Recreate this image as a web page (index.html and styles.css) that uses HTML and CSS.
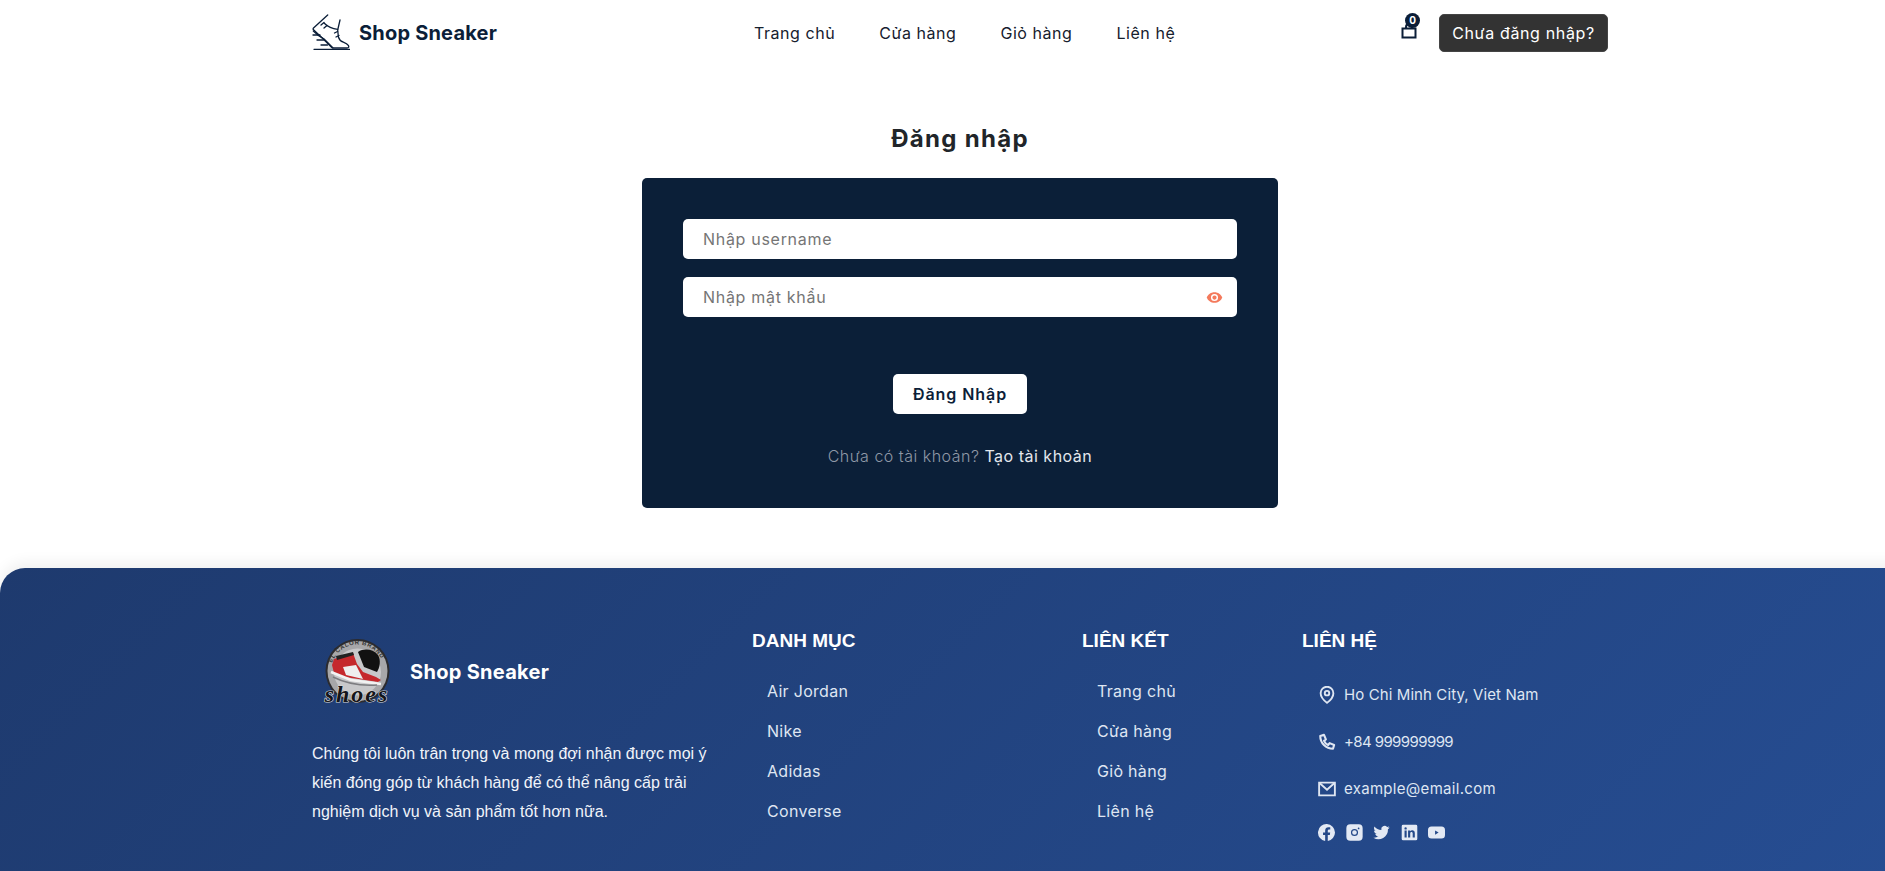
FILE: index.html

```html
<!DOCTYPE html>
<html lang="vi">
<head>
    <meta charset="UTF-8">
    <meta name="viewport" content="width=device-width, initial-scale=1.0">
    <title>Đăng nhập - Shop Sneaker</title>
    <link rel="stylesheet" href="styles.css">
</head>
<body>
    <header class="header">
        <a class="brand" href="#">
            <svg class="brand-logo" viewBox="0 0 38 37" fill="none" stroke="#0b1e38" stroke-width="1.300" stroke-linecap="round" stroke-linejoin="round">
                <path d="M2 35.300h35.500"/>
                <path d="M15.700 1 1.500 14c-.5.6-.5 1.200 0 1.800l8.500 8 9.500 9.500c.5.500 1 .7 1.800.7H35c1.700 0 2.200-1.200 1.300-2.600-1-1.500-3-2.400-5-3.200-2.500-1-4.200-2.600-4.900-5.200L25.700 16 28 6"/>
                <path d="M12.300 9.300c3.500 3.600 8 5.600 13.400 6"/>
                <path d="M1.300 17c3.500 3.500 6.500 6 10.500 7.800l9 9"/>
                <path d="m9 11 3-2.500M12 14l3-2.500M22.500 19l3-1.500M24 23l3-1.500"/>
                <path d="M1 21h7M5 26h6.500M9 31h6.500"/>
            </svg>
            <span>Shop Sneaker</span>
        </a>
        <nav class="nav">
            <a href="#">Trang chủ</a>
            <a href="#">Cửa hàng</a>
            <a href="#">Giỏ hàng</a>
            <a href="#">Liên hệ</a>
        </nav>
        <div class="header-right">
            <a class="cart" href="#">
                <svg viewBox="0 0 16 16" fill="none" stroke="#0b1e38" stroke-width="2">
                    <path d="M1.500 5.500h13v9h-13z"/>
                    <path d="M5 5.500V4a3 3 0 0 1 6 0v1.500"/>
                </svg>
                <span class="cart-count">0</span>
            </a>
            <button class="account-btn">Chưa đăng nhập?</button>
        </div>
    </header>

    <main class="main">
        <h1 class="page-title">Đăng nhập</h1>
        <form class="login-card">
            <div class="field">
                <input type="text" placeholder="Nhập username">
            </div>
            <div class="field">
                <input type="password" placeholder="Nhập mật khẩu">
                <svg class="eye" viewBox="0 0 24 24" fill="#f47a5c">
                    <path d="M12 4.500C7 4.500 2.700 7.600 1 12c1.700 4.400 6 7.500 11 7.500s9.300-3.100 11-7.500c-1.700-4.400-6-7.500-11-7.500zM12 17a5 5 0 1 1 0-10 5 5 0 0 1 0 10zm0-8a3 3 0 1 0 0 6 3 3 0 0 0 0-6z"/>
                </svg>
            </div>
            <button class="submit-btn" type="button">Đăng Nhập</button>
            <p class="signup">Chưa có tài khoản? <a href="#">Tạo tài khoản</a></p>
        </form>
    </main>

    <footer class="footer">
        <div class="footer-inner">
            <div class="footer-about">
                <div class="footer-brand">
                    <svg class="badge" viewBox="0 0 80 85">
                        <defs>
                            <path id="badge-arc" d="M13 39a26.500 26.500 0 0 1 53 0"/>
                        </defs>
                        <circle cx="39.500" cy="39" r="32" fill="#2b2b2f"/>
                        <circle cx="39.500" cy="39" r="30" fill="#a7a7a9"/>
                        <circle cx="39.500" cy="40" r="23.500" fill="#c8c8ca"/>
                        <text class="badge-ring"><textPath href="#badge-arc" startOffset="8">EL CALOR BRAND</textPath></text>
                        <path d="M40 20c6-4 15-3 20 3 3 5 2 12-1 17L46 35z" fill="#111"/>
                        <path d="M16 27l19-6 4 11 6 8 13 5 5 3-3 2-33-5-11-4-2-8z" fill="#c5282c"/>
                        <path d="M18 24l17-4 1 3-17 5z" fill="#222"/>
                        <path d="M25 35l13-2 7 14-17-4z" fill="#eeeeee"/>
                        <path d="M13 40l20 8 30 4" fill="none" stroke="#f2f2f2" stroke-width="2.600"/>
                        <path d="M15 45c14 7 28 9 44 8" fill="none" stroke="#7d7d80" stroke-width="1.500"/>
                        <text class="badge-text" x="39" y="70" text-anchor="middle">shoes</text>
                    </svg>
                    <span class="footer-brand-name">Shop Sneaker</span>
                </div>
                <p class="footer-desc">Chúng tôi luôn trân trọng và mong đợi nhận được mọi ý kiến đóng góp từ khách hàng để có thể nâng cấp trải nghiệm dịch vụ và sản phẩm tốt hơn nữa.</p>
            </div>
            <div class="footer-col">
                <h3>DANH MỤC</h3>
                <ul>
                    <li><a href="#">Air Jordan</a></li>
                    <li><a href="#">Nike</a></li>
                    <li><a href="#">Adidas</a></li>
                    <li><a href="#">Converse</a></li>
                </ul>
            </div>
            <div class="footer-col">
                <h3>LIÊN KẾT</h3>
                <ul>
                    <li><a href="#">Trang chủ</a></li>
                    <li><a href="#">Cửa hàng</a></li>
                    <li><a href="#">Giỏ hàng</a></li>
                    <li><a href="#">Liên hệ</a></li>
                </ul>
            </div>
            <div class="footer-col">
                <h3>LIÊN HỆ</h3>
                <div class="contact-list">
                    <div class="contact-item contact-place">
                        <svg viewBox="0 0 24 24" fill="none" stroke="#dfe6f2" stroke-width="2.500">
                            <path d="M12 22.500s8.500-6.500 8.500-13a8.500 8.500 0 0 0-17 0c0 6.500 8.500 13 8.500 13z"/>
                            <circle cx="12" cy="9.500" r="3"/>
                        </svg>
                        <span>Ho Chi Minh City, Viet Nam</span>
                    </div>
                    <div class="contact-item contact-phone">
                        <svg viewBox="0 0 24 24" fill="none" stroke="#dfe6f2" stroke-width="2.800" stroke-linejoin="round">
                            <path d="M3 4 8 2.500l2.500 6-2.500 2c1.200 2.600 3 4.400 5.500 5.500l2-2.500 6 2.500L20 21C10.500 21 3 13.500 3 4z"/>
                        </svg>
                        <span>+84 999999999</span>
                    </div>
                    <div class="contact-item">
                        <svg viewBox="0 0 24 24" fill="none" stroke="#dfe6f2" stroke-width="2.500">
                            <path d="M1.500 3.500h21v17h-21z"/>
                            <path d="m2 4 10 9 10-9"/>
                        </svg>
                        <span>example@email.com</span>
                    </div>
                    <div class="social">
                        <svg viewBox="0 0 24 24" fill="#e3e9f4">
                            <path d="M24 12a12 12 0 1 0-13.900 11.900v-8.400h-3V12h3V9.400c0-3 1.800-4.700 4.500-4.700 1.300 0 2.700.2 2.700.2v3h-1.500c-1.500 0-2 .9-2 1.900V12h3.400l-.5 3.500h-2.900v8.400A12 12 0 0 0 24 12z"/>
                        </svg>
                        <svg viewBox="0 0 24 24" fill="#e3e9f4">
                            <path fill-rule="evenodd" d="M6 .5h12A5.500 5.500 0 0 1 23.500 6v12a5.500 5.500 0 0 1-5.500 5.500H6A5.500 5.500 0 0 1 .5 18V6A5.500 5.500 0 0 1 6 .5zM12 7a5 5 0 1 0 0 10 5 5 0 0 0 0-10zm0 1.700a3.300 3.300 0 1 1 0 6.600 3.300 3.300 0 0 1 0-6.600zM17.800 5a1.200 1.200 0 1 0 0 2.400 1.200 1.200 0 0 0 0-2.400z"/>
                        </svg>
                        <svg viewBox="0 0 24 24" fill="#e3e9f4">
                            <path d="M23.500 5c-.8.400-1.800.6-2.700.8 1-.6 1.700-1.500 2.100-2.600-.9.500-1.900.9-3 1.100a4.700 4.700 0 0 0-8.100 4.300C7.900 8.400 4.400 6.500 2.100 3.600c-1.300 2.200-.6 4.900 1.500 6.300-.8 0-1.500-.2-2.100-.6 0 2.300 1.600 4.200 3.800 4.700-.7.200-1.400.2-2.100.1.600 1.900 2.300 3.200 4.400 3.300A9.500 9.500 0 0 1 .5 19.300 13.400 13.400 0 0 0 21.100 7.400c.9-.6 1.700-1.400 2.400-2.400z"/>
                        </svg>
                        <svg viewBox="0 0 24 24" fill="#e3e9f4">
                            <path fill-rule="evenodd" d="M3 1h18a2 2 0 0 1 2 2v18a2 2 0 0 1-2 2H3a2 2 0 0 1-2-2V3a2 2 0 0 1 2-2zm2 8v10h3V9zm1.500-4.500a1.700 1.700 0 1 0 0 3.400 1.700 1.700 0 0 0 0-3.400zM10 9v10h3v-5.500c0-1.500.7-2.200 1.800-2.200s1.700.7 1.700 2.200V19h3v-6c0-3-1.500-4.200-3.600-4.200-1.300 0-2.300.6-2.900 1.500V9z"/>
                        </svg>
                        <svg viewBox="0 0 24 24" fill="#e3e9f4">
                            <path fill-rule="evenodd" d="M5 3.500h14a5 5 0 0 1 5 5v7a5 5 0 0 1-5 5H5a5 5 0 0 1-5-5v-7a5 5 0 0 1 5-5zm5 5.500v6l5-3z"/>
                        </svg>
                    </div>
                </div>
            </div>
        </div>
    </footer>
</body>
</html>
```

FILE: styles.css

```css
* { box-sizing: border-box; }
html { height: 100%; overflow: hidden; }
body { margin: 0; width: 1920px; height: 100%; font-family: "Inter", "Noto Sans", sans-serif; background-color: #fff; color: #0b1e38; display: flex; flex-direction: column; }
a { color: inherit; text-decoration: none; }

.header { width: 1296px; height: 65px; margin: 0 auto; display: flex; align-items: center; flex-shrink: 0; }
.brand { width: 442px; display: flex; align-items: center; gap: 9px; font-size: 20px; font-weight: 700; letter-spacing: 0.2px; color: #0b1e38; }
.brand-logo { width: 38px; height: 37px; }
.nav { display: flex; gap: 44px; font-size: 16px; letter-spacing: 0.55px; color: #16202e; }
.header-right { margin-left: auto; display: flex; align-items: center; gap: 22px; }
.cart { position: relative; width: 16px; height: 16px; display: block; margin-bottom: 4px; }
.cart svg { width: 16px; height: 16px; display: block; }
.cart-count { position: absolute; top: -10px; left: 4px; width: 15px; height: 15px; border-radius: 50%; background-color: #0b1e38; color: #fff; font-size: 10px; font-weight: 700; line-height: 15px; text-align: center; }
.account-btn { width: 169px; height: 38px; background-color: #333; color: #fff; border: 1px solid #444; border-radius: 5px; font-family: inherit; font-size: 16px; letter-spacing: 0.65px; cursor: pointer; }

.main { flex: 1; display: flex; flex-direction: column; align-items: center; }
.page-title { margin: 57px 0 0; font-size: 24px; line-height: 34px; font-weight: 700; color: #212529; letter-spacing: 1.3px; }
.login-card { width: 636px; height: 330px; margin-top: 22px; padding: 41px 41px 0; background-color: #0b1f38; border-radius: 5px; display: flex; flex-direction: column; align-items: center; }
.field { position: relative; width: 100%; height: 40px; margin-bottom: 18px; }
.field input { width: 100%; height: 40px; border: none; border-radius: 5px; padding: 0 20px; font-family: inherit; font-size: 16px; letter-spacing: 0.7px; background-color: #fff; outline: none; }
.field input::placeholder { color: #757575; }
.eye { position: absolute; right: 14px; top: 12px; width: 17px; height: 17px; }
.submit-btn { width: 134px; height: 40px; margin-top: 39px; background-color: #fff; color: #0b1e38; border: none; border-radius: 5px; font-family: inherit; font-size: 16px; font-weight: 600; letter-spacing: 0.95px; cursor: pointer; }
.signup { margin: 30px 0 0; font-size: 16px; line-height: 24px; letter-spacing: 0.5px; color: #8f98a6; font-weight: 300; }
.signup a { color: #e3e7ed; font-weight: 400; }

.footer { height: 303px; flex-shrink: 0; background: linear-gradient(135deg, #1e3a6e 0%, #264d92 100%); border-radius: 25px 0 0 0; box-shadow: 0 -6px 14px rgba(0, 0, 0, 0.06); color: #fff; }
.footer-inner { width: 1296px; margin: 0 auto; display: grid; grid-template-columns: 440px 330px 220px 1fr; padding-top: 58px; }
.footer-brand { display: flex; align-items: center; gap: 12px; margin: 6px 0 0 6px; font-size: 20px; font-weight: 700; letter-spacing: 0.3px; }
.footer-brand-name { margin-bottom: 5px; }
.badge { width: 80px; height: 85px; overflow: visible; }
.badge-ring { font-family: "Liberation Sans", Arial, sans-serif; font-size: 6px; font-weight: 700; fill: #333; letter-spacing: 0.6px; }
.badge-text { font-family: "Liberation Serif", serif; font-style: italic; font-weight: 700; font-size: 24px; letter-spacing: 2px; fill: #15151a; stroke: #d8d8d8; stroke-width: 1.200px; paint-order: stroke; }
.footer-desc { width: 410px; margin: 22px 0 0; font-family: "Liberation Sans", Arial, sans-serif; font-size: 16px; line-height: 29px; color: #f1f4fa; }
.footer-col h3 { margin: 0 0 20px; font-family: "Liberation Sans", Arial, sans-serif; font-size: 19px; line-height: 30px; font-weight: 700; }
.footer-col ul { list-style: none; margin: 0; padding: 0 0 0 15px; }
.footer-col li { height: 40px; line-height: 30px; font-size: 16px; letter-spacing: 0.3px; color: #dfe6f2; }
.contact-list { padding: 0 0 0 16px; margin-top: -5px; }
.contact-item { display: flex; align-items: center; gap: 8px; height: 47px; font-size: 15px; letter-spacing: 0.3px; color: #dfe6f2; }
.contact-item svg { width: 18px; height: 18px; flex-shrink: 0; }
.contact-place { letter-spacing: 0.1px; }
.contact-phone { letter-spacing: -0.6px; }
.social { display: flex; align-items: center; gap: 10.5px; margin-top: 12px; }
.social svg { width: 17px; height: 17px; }
```
